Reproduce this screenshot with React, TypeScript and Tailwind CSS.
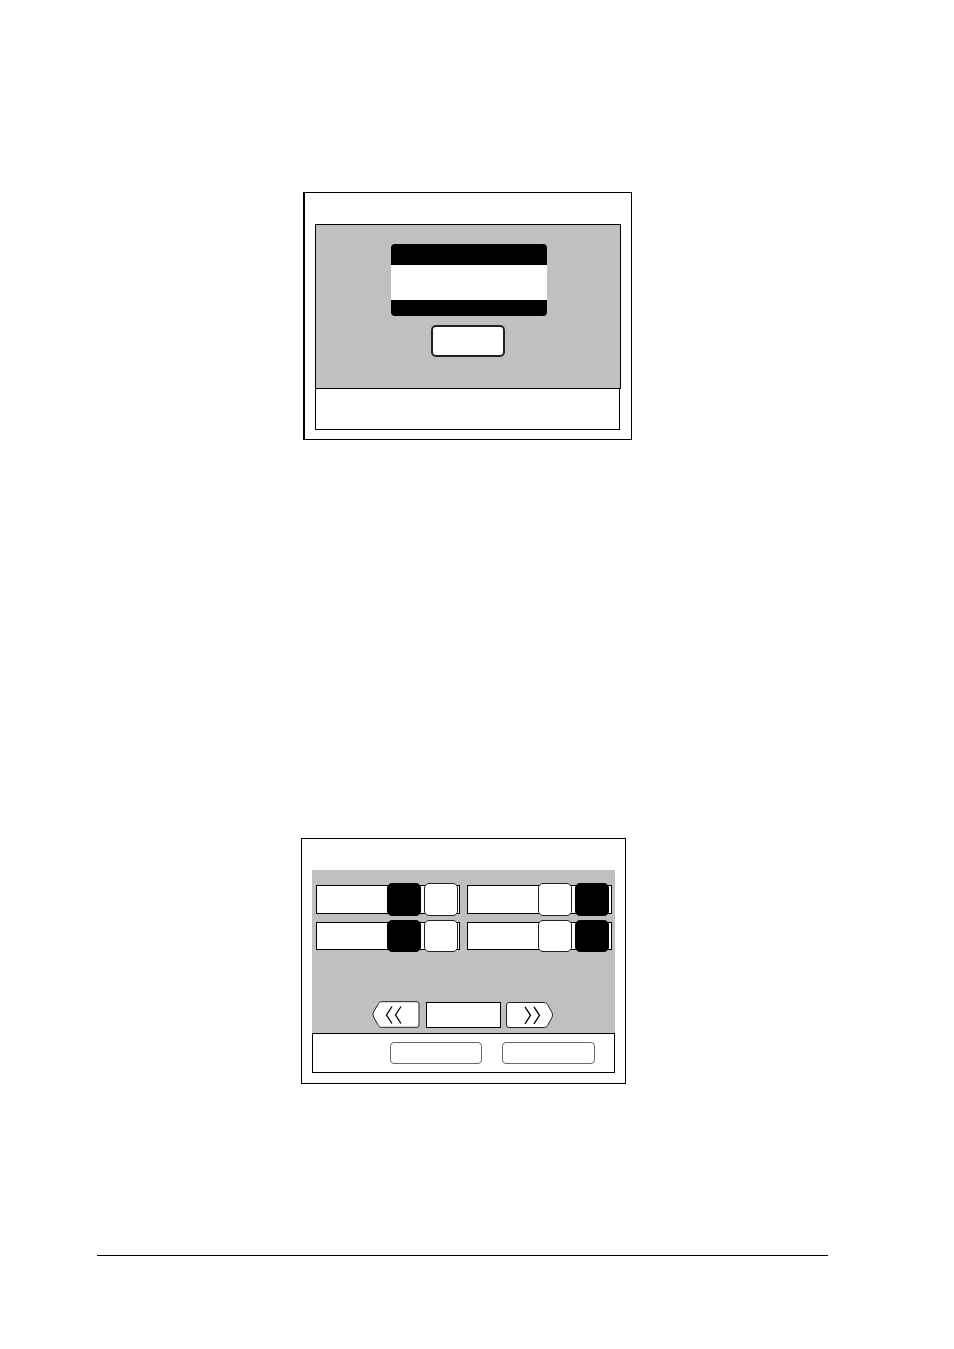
import { useState } from 'react';
import clsx from 'clsx';

type Setting = {
  id: string;
  name: string;
  selected: 0 | 1;
  rowClass: string;
  keyClass: string;
};

const SETTINGS: Setting[] = [
  { id: 'a', name: 'Setting 1', selected: 0, rowClass: 'h-[29px] pr-px', keyClass: 'h-[33px]' },
  { id: 'b', name: 'Setting 2', selected: 1, rowClass: 'h-[29px] pr-[2px]', keyClass: 'h-[33px]' },
  { id: 'c', name: 'Setting 3', selected: 0, rowClass: 'h-7 pr-px', keyClass: 'h-8' },
  { id: 'd', name: 'Setting 4', selected: 1, rowClass: 'h-7 pr-[2px]', keyClass: 'h-8' },
];

function MessagePanel() {
  return (
    <div className="w-full max-w-[329px] mx-auto border border-l-2 border-black pt-[31px] px-[10px] pb-[9px]">
      <div className="border border-black bg-[#c0c0c0] h-[165px] pt-[19px] flex flex-col items-center">
        <div className="w-[156px] h-[72px] ml-[2px] rounded overflow-hidden bg-white border-black border-t-[21px] border-b-[16px]" />
        <button
          type="button"
          aria-label="OK"
          className="mt-[9px] w-[74px] h-8 rounded-[5px] border-2 border-[#222222] bg-white"
        />
      </div>
      <div className="mr-px h-[41px] border border-t-0 border-black" />
    </div>
  );
}

function SettingRow({ setting }: { setting: Setting }) {
  const [selected, setSelected] = useState<number>(setting.selected);

  return (
    <div
      role="group"
      aria-label={setting.name}
      className={clsx('border border-black bg-white flex items-center justify-end gap-[3px]', setting.rowClass)}
    >
      {[0, 1].map((i) => (
        <button
          key={i}
          type="button"
          aria-label={`Option ${i + 1}`}
          aria-pressed={selected === i}
          onClick={() => setSelected(i)}
          className={clsx(
            'flex-none w-[34px] rounded-[5px] border',
            setting.keyClass,
            selected === i ? 'bg-black border-black' : 'bg-white border-[#222222]'
          )}
        />
      ))}
    </div>
  );
}

function PreviousIcon() {
  return (
    <svg width="49" height="28" viewBox="0 0 49 28" fill="none" stroke="#222222" aria-hidden="true">
      <path d="M9.5 1.7H45Q47 1.7 47 4V25Q47 27.3 45 27.3H9.5Q7.5 27.3 6.5 25.5L1.5 17Q0.5 14.5 1.5 12L6.5 3.5Q7.5 1.7 9.5 1.7Z" fill="white" />
      <path d="M20 6.5L14.5 15L20 23.5M29 6.5L23.5 15L29 23.5" stroke="black" strokeWidth="1.3" />
    </svg>
  );
}

function NextIcon() {
  return (
    <svg width="48" height="28" viewBox="0 0 48 28" fill="none" stroke="#222222" aria-hidden="true">
      <path d="M3 2.5H38.5Q40.5 2.5 41.5 4.5L46 12.5Q47 15 46 17.5L41.5 25.5Q40.5 27.5 38.5 27.5H3Q0.5 27.5 0.5 25V5Q0.5 2.5 3 2.5Z" fill="white" />
      <path d="M19 6.8L24.5 15.3L19 23.8M28 6.8L33.5 15.3L28 23.8" stroke="black" strokeWidth="1.3" />
    </svg>
  );
}

function SettingsPanel() {
  return (
    <div className="w-full max-w-[325px] mx-auto border border-black pt-[31px] px-[10px] pb-[10px]">
      <div className="bg-[#c0c0c0] h-[163px] pt-[15px] pl-1 pr-[3px] flex flex-col">
        <div className="grid grid-cols-[144fr_145fr] gap-x-[7px] gap-y-2">
          {SETTINGS.map((setting) => (
            <SettingRow key={setting.id} setting={setting} />
          ))}
        </div>
        <div className="mt-auto mb-[5px] pr-[2px] flex items-end justify-center gap-[5px]">
          <button type="button" aria-label="Previous page">
            <PreviousIcon />
          </button>
          <div className="w-[75px] h-[26px] border border-black bg-white" />
          <button type="button" aria-label="Next page">
            <NextIcon />
          </button>
        </div>
      </div>
      <div className="h-10 border border-black bg-white flex items-center justify-end gap-5 pr-[19px]">
        <button type="button" aria-label="Cancel" className="w-[92px] h-[22px] rounded-[4px] border border-[#666666]" />
        <button type="button" aria-label="Enter" className="w-[93px] h-[22px] rounded-[4px] border border-[#666666]" />
      </div>
    </div>
  );
}

export default function App() {
  return (
    <main className="min-h-screen bg-white pt-48 pl-[97px] pr-[126px]">
      <section className="pl-[10px]">
        <MessagePanel />
      </section>
      <section className="mt-[398px] pl-[2px]">
        <SettingsPanel />
      </section>
      <hr className="mt-[171px] border-t border-black" />
    </main>
  );
}
